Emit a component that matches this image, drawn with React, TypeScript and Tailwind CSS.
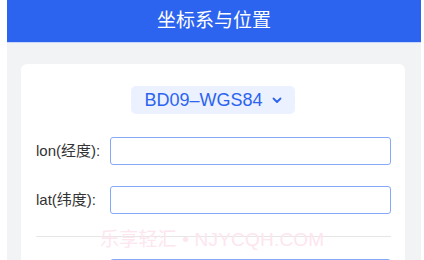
import React from "react";

const font = { fontFamily: '"Liberation Sans", "Noto Sans CJK SC", sans-serif' };

function Row({ label }: { label: string }) {
  return (
    <div className="flex items-center">
      <div className="w-[74px] text-[15px] text-[#333333] shrink-0">{label}</div>
      <div className="w-[281px] h-[28px] rounded-[3px] border border-[#86a9f7] bg-white" />
    </div>
  );
}

export default function App() {
  return (
    <div className="w-[424px] h-[260px] overflow-hidden bg-white pl-[7px]" style={font}>
      <div className="w-[414px] h-[260px] bg-[#f2f3f5] relative">
        <div className="h-[43px] bg-[#2c64f0] border-b border-[#c8d7fb] flex items-center justify-center text-white text-[19px]">
          坐标系与位置
        </div>
        <div className="ml-[14px] mt-[21px] w-[384px] h-[300px] bg-white rounded-[6px] pt-[22px] pl-[15px]">
          <div className="flex justify-center pr-[15px]">
            <div className="w-[164px] h-[28px] rounded-[5px] bg-[#ebf1fe] flex items-center justify-center gap-[9px] text-[#2c64f0] text-[18px]">
              <span>BD09–WGS84</span>
              <svg width="10" height="7" viewBox="0 0 10 7" fill="none">
                <path d="M1.5 1.5L5 5L8.5 1.5" stroke="#2c64f0" strokeWidth="1.8" strokeLinecap="round" strokeLinejoin="round" />
              </svg>
            </div>
          </div>
          <div className="mt-[23px] flex flex-col gap-[21px]">
            <Row label="lon(经度):" />
            <Row label="lat(纬度):" />
          </div>
          <div className="mt-[22px] w-[355px] h-px bg-[#e6e6e6]" />
          <div className="mt-[22px] flex">
            <div className="w-[74px]" />
            <div className="w-[281px] h-[28px] rounded-[3px] border border-[#86a9f7]" />
          </div>
        </div>
        <div className="absolute left-[93px] top-[226px] text-[19px] tracking-[0.2px] text-[#fde6ef] whitespace-nowrap">
          乐享轻汇 • NJYCQH.COM
        </div>
      </div>
    </div>
  );
}
